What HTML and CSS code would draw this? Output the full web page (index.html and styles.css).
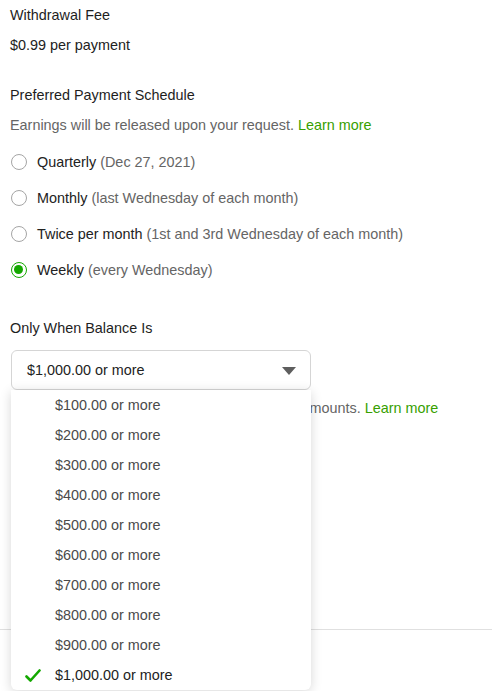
FILE: index.html
```html
<!DOCTYPE html>
<html>
<head>
<meta charset="utf-8">
<link rel="stylesheet" href="styles.css">
</head>
<body>
<div class="page">
  <div class="content">
    <div class="label first">Withdrawal Fee</div>
    <div class="value">$0.99 per payment</div>

    <div class="label section">Preferred Payment Schedule</div>
    <div class="help">Earnings will be released upon your request. <a class="link" href="#">Learn more</a></div>

    <div class="radios">
      <label class="radio"><span class="dot"></span><span class="rtext">Quarterly <span class="muted">(Dec 27, 2021)</span></span></label>
      <label class="radio"><span class="dot"></span><span class="rtext">Monthly <span class="muted">(last Wednesday of each month)</span></span></label>
      <label class="radio"><span class="dot"></span><span class="rtext">Twice per month <span class="muted">(1st and 3rd Wednesday of each month)</span></span></label>
      <label class="radio checked"><span class="dot"></span><span class="rtext">Weekly <span class="muted">(every Wednesday)</span></span></label>
    </div>

    <div class="label section">Only When Balance Is</div>
    <div class="select-wrap">
      <div class="select">
        <span>$1,000.00 or more</span>
        <svg class="caret" width="14" height="8" viewBox="0 0 14 8"><path d="M0 0 H14 L7 8 Z" fill="#5e5e5e"/></svg>
      </div>
      <ul class="menu">
        <li>$100.00 or more</li>
        <li>$200.00 or more</li>
        <li>$300.00 or more</li>
        <li>$400.00 or more</li>
        <li>$500.00 or more</li>
        <li>$600.00 or more</li>
        <li>$700.00 or more</li>
        <li>$800.00 or more</li>
        <li>$900.00 or more</li>
        <li class="selected"><svg class="check" width="16" height="14" viewBox="0 0 16 14"><path d="M1.5 7.5 L5.5 11.5 L14.5 1.5" fill="none" stroke="#14a800" stroke-width="2.6" stroke-linecap="round" stroke-linejoin="round"/></svg>$1,000.00 or more</li>
      </ul>
    </div>
    <div class="help under">Withdrawn only when balance reaches these amounts. <a class="link" href="#">Learn more</a></div>
  </div>
  <div class="footer"></div>
</div>
</body>
</html>
```

FILE: styles.css
```css
* { box-sizing: border-box; }
html, body { margin: 0; padding: 0; background: #fff; }
body {
  font-family: "Liberation Sans", Arial, sans-serif;
  font-size: 14.4px;
  color: #222;
}
.page { width: 492px; height: 691px; overflow: hidden; }
.content { padding: 0 10px; }
.label { line-height: 20px; color: #1e1e1e; }
.label.first { padding-top: 5px; }
.label.section { margin-top: 30px; }
.value { line-height: 20px; margin-top: 10px; color: #222; }
.help { line-height: 20px; margin-top: 10px; color: #656565; }
.link { color: #37a000; text-decoration: none; }
.radios { display: flex; flex-direction: column; margin-top: 9px; }
.radio { display: flex; align-items: center; height: 36px; gap: 10px; }
.dot {
  width: 16px; height: 16px; border-radius: 50%;
  border: 1px solid #a5a5a5; margin-left: 1px; flex: none;
  position: relative; background: #fff;
}
.radio.checked .dot { border: 1.5px solid #14a800; }
.radio.checked .dot::after {
  content: ""; position: absolute; left: 2px; top: 2px; width: 9px; height: 9px;
  border-radius: 50%; background: #14a800;
}
.rtext { color: #222; }
.muted { color: #656565; }
.select-wrap { position: relative; margin-top: 12px; margin-left: 1px; width: 300px; }
.select {
  height: 40px; border: 1px solid #d5d5d5; border-radius: 6px;
  display: flex; align-items: center; justify-content: space-between;
  padding: 0 14px 0 15px; color: #222;
}
.caret { display: block; margin-top: 1px; }
.menu {
  position: absolute; left: 0; top: 100%; width: 300px;
  margin: 0; padding: 0; list-style: none; background: #fff;
  box-shadow: 0 2px 12px rgba(0,0,0,0.16);
  border-radius: 0 0 6px 6px; z-index: 2;
}
.menu li {
  height: 30px; display: flex; align-items: center; padding-left: 44px;
  color: #4a4a4a; position: relative;
}
.menu li.selected { color: #222; }
.check { position: absolute; left: 14px; top: 9px; }
.help.under { margin-top: 8px; margin-left: 2px; white-space: nowrap; }
.footer { margin-top: 211px; border-top: 1px solid #e0e0e0; }
```
